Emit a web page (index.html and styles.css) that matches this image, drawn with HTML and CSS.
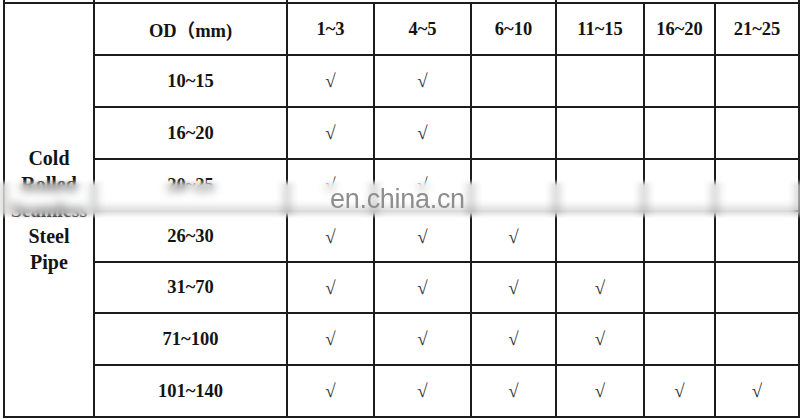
FILE: index.html
```html
<!DOCTYPE html>
<html>
<head>
<meta charset="utf-8">
<link rel="stylesheet" href="styles.css">
</head>
<body>
<div class="page">
  <div class="prev-row">
    <div class="pc"></div>
    <div class="pc"></div>
    <div class="pc"></div>
    <div class="pc"></div>
  </div>
  <div class="table">
    <div class="cell side">Cold<br>Rolled<br>Seamless<br>Steel<br>Pipe</div>
    <div class="cell head">OD（mm)</div>
    <div class="cell head">1~3</div>
    <div class="cell head">4~5</div>
    <div class="cell head">6~10</div>
    <div class="cell head">11~15</div>
    <div class="cell head">16~20</div>
    <div class="cell head">21~25</div>

    <div class="cell head">10~15</div>
    <div class="cell chk">√</div><div class="cell chk">√</div><div class="cell"></div><div class="cell"></div><div class="cell"></div><div class="cell"></div>

    <div class="cell head">16~20</div>
    <div class="cell chk">√</div><div class="cell chk">√</div><div class="cell"></div><div class="cell"></div><div class="cell"></div><div class="cell"></div>

    <div class="cell head">20~25</div>
    <div class="cell chk">√</div><div class="cell chk">√</div><div class="cell"></div><div class="cell"></div><div class="cell"></div><div class="cell"></div>

    <div class="cell head">26~30</div>
    <div class="cell chk">√</div><div class="cell chk">√</div><div class="cell chk">√</div><div class="cell"></div><div class="cell"></div><div class="cell"></div>

    <div class="cell head">31~70</div>
    <div class="cell chk">√</div><div class="cell chk">√</div><div class="cell chk">√</div><div class="cell chk">√</div><div class="cell"></div><div class="cell"></div>

    <div class="cell head">71~100</div>
    <div class="cell chk">√</div><div class="cell chk">√</div><div class="cell chk">√</div><div class="cell chk">√</div><div class="cell"></div><div class="cell"></div>

    <div class="cell head">101~140</div>
    <div class="cell chk">√</div><div class="cell chk">√</div><div class="cell chk">√</div><div class="cell chk">√</div><div class="cell chk">√</div><div class="cell chk">√</div>
  </div>
  <div class="band"></div>
  <div class="watermark">en.china.cn</div>
</div>
</body>
</html>
```
FILE: styles.css
```css
html, body {
  margin: 0;
  padding: 0;
  background: #fff;
}
.page {
  position: relative;
  width: 800px;
  height: 419px;
  overflow: hidden;
  font-family: "Liberation Serif", "Noto Sans CJK SC", serif;
  color: #141414;
}
.prev-row {
  display: grid;
  grid-template-columns: 88px 191px 267px 241px;
  column-gap: 2px;
  padding: 0 2px;
  margin-left: 3px;
  width: 793px;
  height: 2px;
  background: #1c1c1c;
}
.pc {
  background: #fff;
}
.table {
  display: grid;
  grid-template-columns: 88px 191px 85px 95px 83px 86px 69px 82px;
  grid-template-rows: 50px 50px 50px 50px 49px 49px 50px 50px;
  gap: 2px;
  padding: 2px;
  margin-left: 3px;
  width: 793px;
  background: #1c1c1c;
}
.cell {
  background: #fff;
  display: flex;
  align-items: center;
  justify-content: center;
}
.side {
  grid-row: 1 / span 8;
  flex-direction: column;
  text-align: center;
  font-weight: bold;
  font-size: 20px;
  line-height: 26px;
  white-space: nowrap;
}
.head {
  font-weight: bold;
  font-size: 18.5px;
}
.chk {
  font-size: 19px;
  color: #333;
}
.band {
  position: absolute;
  left: 0;
  top: 179px;
  width: 800px;
  height: 40px;
  backdrop-filter: blur(5px);
  -webkit-backdrop-filter: blur(5px);
  background: rgba(255, 255, 255, 0.25);
  -webkit-mask-image: linear-gradient(to bottom, transparent 0, #000 6px, #000 34px, transparent 40px);
  mask-image: linear-gradient(to bottom, transparent 0, #000 6px, #000 34px, transparent 40px);
}
.watermark {
  position: absolute;
  left: 330px;
  top: 183px;
  font-family: "Liberation Sans", Arial, sans-serif;
  font-size: 27px;
  line-height: 32px;
  color: #8e8e8e;
  letter-spacing: -0.3px;
}
```
